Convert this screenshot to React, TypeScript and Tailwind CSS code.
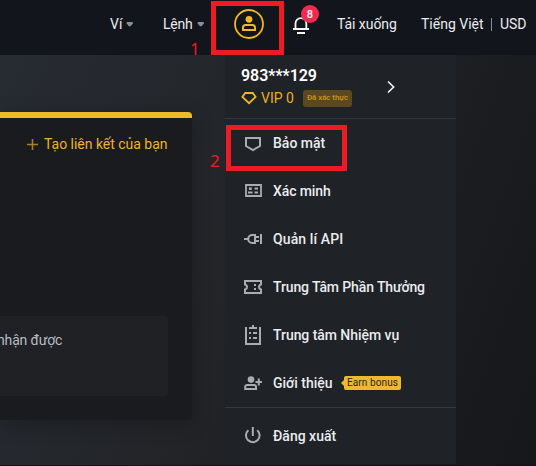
import type { ReactNode } from 'react';

const Caret = () => (
  <svg width="8" height="5" viewBox="0 0 8 5" className="shrink-0" fill="#848e9c">
    <path d="M.7 0h6.1v1.6L4.6 4.3H2.9L.7 1.6z" />
  </svg>
);

const Icon = ({ children }: { children: ReactNode }) => (
  <svg width="20" height="24" viewBox="0 0 20 24" className="mr-[10px] shrink-0" fill="none" stroke="#a9acb0" strokeWidth="2">
    {children}
  </svg>
);

const ShieldIcon = () => (
  <Icon>
    <path d="M3 7h14v8l-7 4-7-4z" />
  </Icon>
);

const IdIcon = () => (
  <Icon>
    <path d="M3 6h15v11H3z" strokeWidth="1.8" />
    <path d="M5 13.5h4.6M11.5 9.5H15M11.5 13.5H15" />
    <path d="M6 8.3h2.7v2.7H6z" fill="#a9acb0" stroke="none" />
  </Icon>
);

const PlugIcon = () => (
  <Icon>
    <path d="M1 12h4M12 8H9.2a4 4 0 0 0 0 8H12M12 7v10M12 10h4M12 14h4M18 7v10" />
  </Icon>
);

const TicketIcon = () => (
  <Icon>
    <path d="M2 6h16v3.5c-2.6.6-2.6 4.4 0 5V18H2v-3.5c2.6-.6 2.6-4.4 0-5z" />
    <path d="M12 9v2M12 13v2" />
  </Icon>
);

const ClipboardIcon = () => (
  <Icon>
    <path d="M3 4v17h14V4M6 5h8M10 2v3.5M6 10h2M10 10h4M6 15h2M10 15h4" />
  </Icon>
);

const InviteIcon = () => (
  <Icon>
    <circle cx="8" cy="8.6" r="3.3" fill="#a9acb0" stroke="none" />
    <path d="M2.2 18v-2c0-1.2.8-2 2-2H11c1.2 0 2 .8 2 2v2zM12.5 11H19M15.8 7.6v6.8" />
  </Icon>
);

const PowerIcon = () => (
  <Icon>
    <path d="M9.8 3v9M5.4 6.2a6.8 6.8 0 1 0 8.8 0" />
  </Icon>
);

const Row = ({ icon, children }: { icon: ReactNode; children: ReactNode }) => (
  <div className="flex h-12 items-center pl-[18px] text-[14px] font-medium leading-6 text-[#eaecef]">
    {icon}
    {children}
  </div>
);

const Header = () => (
  <header className="flex h-[55px] items-start bg-[#12161c] pl-[110px] pt-3 text-[14px] leading-6 text-[#eaecef]">
    <div className="flex w-[53px] items-center gap-1">
      <span className="w-3">Ví</span>
      <Caret />
    </div>
    <div className="flex w-[71px] items-center gap-1">
      <span className="w-[30px] tracking-[-0.2px]">Lệnh</span>
      <Caret />
    </div>
    <svg width="30" height="30" viewBox="0 0 30 30" className="-mt-[3px] shrink-0" fill="none" stroke="#eeb827">
      <circle cx="15" cy="15" r="14" strokeWidth="1.8" />
      <circle cx="15" cy="10.3" r="3.4" fill="#eeb827" stroke="none" />
      <path d="M9 21v-2.5C9 16.8 10 16 11.6 16h6.8c1.6 0 2.6.8 2.6 2.5V21z" strokeWidth="2" />
    </svg>
    <div className="relative ml-7 h-6 w-[45px]">
      <svg width="20" height="24" viewBox="0 0 20 24" fill="none" stroke="#f5f5f5" strokeWidth="1.8">
        <path d="M1 17h16M3.5 17v-5.5a5.4 5.4 0 0 1 10.8 0V17" />
        <path d="M5 21h8" strokeWidth="2" />
      </svg>
      <span className="absolute -top-[7px] left-[9px] flex h-[18px] w-[18px] items-center justify-center rounded-full bg-[#f12b50] text-[11px] font-medium leading-none text-white">8</span>
    </div>
    <span className="w-[84px] whitespace-nowrap tracking-[-0.05px]">Tải xuống</span>
    <span className="w-[70px] whitespace-nowrap">Tiếng Việt</span>
    <i className="mr-2 mt-[6px] h-[13px] w-px bg-[#848e9c]" />
    <span className="tracking-[-0.1px]">USD</span>
  </header>
);

const ReferralCard = () => (
  <section className="mt-[57px] h-[308px] w-[192px] overflow-hidden rounded-r-[4px] border-t-[6px] border-[#f0b92b] bg-[#1a1b1f] shadow-[0_4px_20px_rgba(0,0,0,0.25)]">
    <div className="mt-[14px] flex h-6 items-center pl-[27px] text-[14px] text-[#eeb329]">
      <svg width="11" height="11" viewBox="0 0 11 11" className="mr-[6px]" stroke="#a78024" strokeWidth="1.6">
        <path d="M0 5.5h11M5.5 0v11" />
      </svg>
      <span className="whitespace-nowrap tracking-[-0.02px]">Tạo liên kết của bạn</span>
    </div>
    <div className="mt-[160px] h-20 w-[168px] rounded-r-[4px] bg-[#202125] pt-3 text-[14px] leading-6 text-[#b7bdc6]">
      <span className="-ml-[3px] tracking-[-0.15px]">nhận được</span>
    </div>
  </section>
);

const AccountMenu = () => (
  <aside className="h-[409px] w-[231px] bg-[#1f2226]">
    <div className="flex h-16 items-center border-b border-[#363a3f]">
      <div className="w-[146px] pl-4 pt-px">
        <div className="text-[16px] font-semibold leading-[22px] tracking-[-0.05px] text-white">983***129</div>
        <div className="flex h-[22px] items-center text-[14px] text-[#e9b124]">
          <svg width="16" height="14" viewBox="0 0 16 14" fill="none" stroke="#eeb827" strokeWidth="1.8" className="mr-1">
            <path d="M4.2 2h7.6l2.8 4L8 12.2 1.4 6z" />
          </svg>
          <span className="w-[42px] whitespace-nowrap">VIP 0</span>
          <span className="flex h-[17px] w-[49px] shrink-0 items-center justify-center whitespace-nowrap rounded-[3px] bg-[#5c481f] text-[8px] font-medium tracking-[-0.1px] text-[#c9971f]">Đã xác thực</span>
        </div>
      </div>
      <svg width="8" height="14" viewBox="0 0 8 14" className="ml-4" fill="none" stroke="#f0f0f0" strokeWidth="1.7">
        <path d="M1 1.5 6.6 7 1 12.5" />
      </svg>
    </div>
    <nav className="h-[289px] border-b border-[#363a3f]">
      <Row icon={<ShieldIcon />}><span>Bảo mật</span></Row>
      <Row icon={<IdIcon />}><span className="tracking-[-0.1px]">Xác minh</span></Row>
      <Row icon={<PlugIcon />}><span className="tracking-[0.1px]">Quản lí API</span></Row>
      <Row icon={<TicketIcon />}><span className="tracking-[-0.12px]">Trung Tâm Phần Thưởng</span></Row>
      <Row icon={<ClipboardIcon />}><span className="tracking-[-0.05px]">Trung tâm Nhiệm vụ</span></Row>
      <Row icon={<InviteIcon />}>
        <span className="w-[68px]">Giới thiệu</span>
        <i className="h-0 w-0 border-y-[3px] border-r-[3px] border-y-transparent border-r-[#f0b92b]" />
        <span className="flex h-[14px] w-[57px] items-center justify-center whitespace-nowrap rounded-[2px] bg-[#f0b92b] text-[10px] font-normal tracking-[0.12px] text-[#242529]">Earn bonus</span>
      </Row>
    </nav>
    <div className="pt-1">
      <Row icon={<PowerIcon />}><span>Đăng xuất</span></Row>
    </div>
  </aside>
);

export default function App() {
  return (
    <main className="relative h-[466px] w-[536px] overflow-hidden bg-[#12161c] font-['Roboto','Noto_Sans',sans-serif]">
      <Header />
      <div className="flex h-[410px] gap-[33px] bg-[linear-gradient(110deg,#272b32_0%,#232529_42%,#1b1c20_77%,#16171b_100%)]">
        <ReferralCard />
        <AccountMenu />
      </div>
      <div className="h-px bg-[#190f1b]" />
      <div className="absolute left-[211px] top-px h-[54px] w-[73px] border-[5px] border-[#ed1c24]" />
      <span className="absolute left-[190px] top-[40px] font-['Noto_Sans',sans-serif] text-[17px] leading-[18px] text-[#ed1c24]">1</span>
      <div className="absolute left-[226px] top-[125px] h-[46px] w-[121px] border-[5px] border-[#ed1c24]" />
      <span className="absolute left-[210px] top-[152px] font-['Noto_Sans',sans-serif] text-[17px] leading-[18px] text-[#ed1c24]">2</span>
    </main>
  );
}
